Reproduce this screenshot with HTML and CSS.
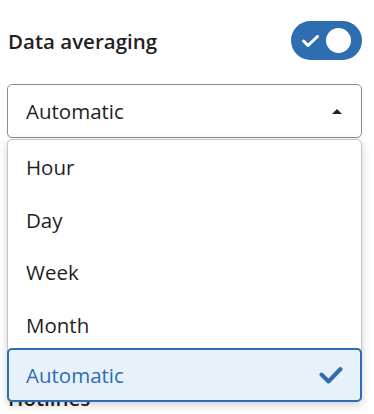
FILE: index.html
```html
<!DOCTYPE html>
<html lang="en">
  <head>
    <meta charset="UTF-8" />
    <meta name="viewport" content="width=device-width, initial-scale=1.0" />
    <title>Data averaging</title>
    <link rel="stylesheet" href="styles.css">
  </head>
  <body>
    <!-- Data averaging setting -->
    <section class="setting">
      <div class="setting-header">
        <h2 class="setting-title">Data averaging</h2>
        <div class="toggle on">
          <svg class="toggle-check" width="17" height="12" viewBox="0 0 17 12">
            <path d="M1.5 6 L6 10.5 L15.5 1.5" fill="none" stroke="#fff" stroke-width="3" stroke-linecap="round" stroke-linejoin="round" />
          </svg>
          <span class="toggle-knob"></span>
        </div>
      </div>

      <div class="select-wrap">
        <div class="select-box">
          <span>Automatic</span>
          <span class="caret"></span>
        </div>
        <ul class="select-menu">
          <li class="option">Hour</li>
          <li class="option">Day</li>
          <li class="option">Week</li>
          <li class="option">Month</li>
          <li class="option selected">
            <span>Automatic</span>
            <svg width="24" height="19" viewBox="0 0 24 19">
              <path d="M2.5 8.5 L9.5 15.5 L21.5 3" fill="none" stroke="#2f6db1" stroke-width="4" stroke-linecap="round" stroke-linejoin="round" />
            </svg>
          </li>
        </ul>
      </div>
    </section>

    <section class="setting">
      <h2 class="setting-title">Hotlines</h2>
    </section>
  </body>
</html>
```

FILE: styles.css
```css
* {
  margin: 0;
  padding: 0;
  box-sizing: border-box;
  font-family: "Open Sans", "Noto Sans", sans-serif;
}

:root {
  --primary: #2f6db1;
  --selected: #e6f1fa;
  --text: #1f1f1f;
}

body {
  background: #ffffff;
  color: var(--text);
  padding: 0 12px 0 7px;
}

.setting-header {
  display: flex;
  justify-content: space-between;
  align-items: center;
  padding-top: 21px;
}

.setting-title {
  font-size: 20.5px;
  line-height: 28px;
  font-weight: 600;
  padding-left: 1px;
}

/* Toggle */
.toggle {
  width: 71px;
  height: 39px;
  border-radius: 20px;
  background: var(--primary);
  display: flex;
  align-items: center;
  justify-content: space-between;
  padding: 0 11px 0 11px;
}

.toggle-knob {
  width: 25px;
  height: 25px;
  border-radius: 50%;
  background: #ffffff;
}

/* Select */
.select-wrap {
  position: relative;
  margin-top: 24px;
}

.select-box {
  height: 54px;
  border: 1px solid #8c8c8c;
  border-radius: 5px;
  display: flex;
  align-items: center;
  justify-content: space-between;
  padding: 0 19px 0 18px;
  font-size: 20.5px;
}

.caret {
  width: 0;
  height: 0;
  border-left: 5.5px solid transparent;
  border-right: 5.5px solid transparent;
  border-bottom: 5.5px solid #222;
}

.select-menu {
  position: absolute;
  top: 55px;
  left: 0;
  right: 0;
  list-style: none;
  background: #ffffff;
  border: 1px solid #c4c4c4;
  border-radius: 5px;
  box-shadow: 0 3px 10px rgba(0, 0, 0, 0.18);
  padding-top: 1px;
  z-index: 10;
}

.option {
  height: 52.5px;
  display: flex;
  align-items: center;
  justify-content: space-between;
  padding: 0 18px 0 18px;
  font-size: 20.5px;
}

.option.selected {
  margin: -3px -1px -1px;
  height: 54px;
  background: var(--selected);
  border: 2px solid var(--primary);
  border-radius: 5px;
  color: var(--primary);
  padding: 0 17px 0 17px;
}

.setting + .setting {
  padding-top: 246px;
}
```
